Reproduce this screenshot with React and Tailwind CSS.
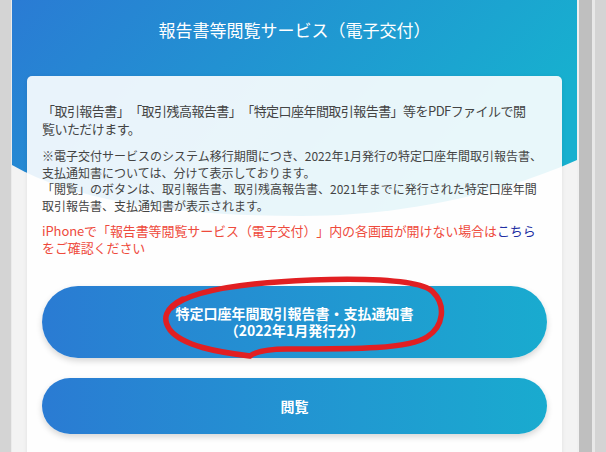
import React from "react";

function HeaderWave() {
  return (
    <svg
      className="absolute left-0 top-0"
      width="565"
      height="230"
      viewBox="0 0 565 230"
      preserveAspectRatio="none"
    >
      <defs>
        <linearGradient id="hg" x1="0" y1="0" x2="1" y2="0.35">
          <stop offset="0" stopColor="#2a7bd4" />
          <stop offset="1" stopColor="#17b0cf" />
        </linearGradient>
      </defs>
      <path
        d="M0 0 H565 V160 C480 198 380 216 290 216 C180 216 70 205 0 165 Z"
        fill="url(#hg)"
      />
    </svg>
  );
}

function RedCircle() {
  return (
    <svg
      className="absolute left-[115px] top-[-12px] pointer-events-none"
      width="295"
      height="92"
      viewBox="0 0 295 92"
    >
      <path
        d="M14 34 C30 18 80 9 155 6 C215 4 264 6 276 18 C289 31 287 52 270 63 C252 75 200 75 130 75 C112 75 100 77 93 82 C60 78 26 72 13 56 C5 45 8 34 26 25"
        fill="none"
        stroke="#e11f22"
        strokeWidth="5.5"
        strokeLinecap="round"
        strokeLinejoin="round"
      />
    </svg>
  );
}

export default function App() {
  return (
    <div className="flex h-[452px] w-[606px] overflow-hidden font-[family-name:'Noto_Sans_CJK_JP','Noto_Sans',sans-serif]">
      <div className="w-[11px] shrink-0 bg-[#d4d4d4]" />
      <div className="w-px shrink-0 bg-[#ebebeb]" />
      <main className="relative w-[565px] shrink-0 bg-[#f3f3f3]">
        <HeaderWave />
        <div className="relative flex flex-col">
          <h1 className="flex h-[76px] items-start justify-center pt-[18px] text-[17px] leading-[24px] font-normal text-white [text-spacing-trim:space-all]">
            報告書等閲覧サービス（電子交付）
          </h1>
          <div className="mx-[15px] rounded-[5px] bg-white/90 px-[15px] pt-[26px] pb-6 shadow-[0_1px_4px_rgba(0,0,0,0.08)] [text-spacing-trim:space-all]">
            <p className="text-[13px] leading-[18px] whitespace-nowrap tracking-[-0.55px] text-[#444]">
              「取引報告書」「取引残高報告書」「特定口座年間取引報告書」等をPDFファイルで閲
              <br />
              覧いただけます。
            </p>
            <p className="mt-[10px] text-[12px] leading-[16.5px] whitespace-nowrap text-[#444]">
              ※電子交付サービスのシステム移行期間につき、2022年1月発行の特定口座年間取引報告書、
              <br />
              支払通知書については、分けて表示しております。
              <br />
              「閲覧」のボタンは、取引報告書、取引残高報告書、2021年までに発行された特定口座年間
              <br />
              取引報告書、支払通知書が表示されます。
            </p>
            <p className="mt-[8px] text-[13px] leading-[17px] whitespace-nowrap tracking-[-0.1px] text-[#ee4a3c]">
              iPhoneで「報告書等閲覧サービス（電子交付）」内の各画面が開けない場合は
              <span className="text-[#1f2fa3]">こちら</span>
              <br />
              をご確認ください
            </p>
            <div className="relative mt-[30px]">
              <button className="flex h-[72px] w-full flex-col items-center justify-center rounded-full bg-linear-to-r from-[#2a7bd3] to-[#19abcf] text-[14px] leading-[17px] font-bold text-white shadow-[0_3px_6px_rgba(0,0,0,0.16)]">
                <span>特定口座年間取引報告書・支払通知書</span>
                <span>（2022年1月発行分）</span>
              </button>
              <RedCircle />
            </div>
            <button className="mt-[20px] flex h-[56px] w-full items-center justify-center rounded-full bg-linear-to-r from-[#2a7bd3] to-[#19abcf] text-[14px] font-bold text-white shadow-[0_3px_6px_rgba(0,0,0,0.16)]">
              閲覧
            </button>
          </div>
        </div>
      </main>
      <div className="w-[2px] shrink-0 bg-[#f0f0f0]" />
      <div className="w-[13px] shrink-0 bg-[#bfbfbf]" />
      <div className="w-[3px] shrink-0 bg-[#e8e8e8]" />
      <div className="w-[11px] shrink-0 bg-[#d4d4d4]" />
    </div>
  );
}
